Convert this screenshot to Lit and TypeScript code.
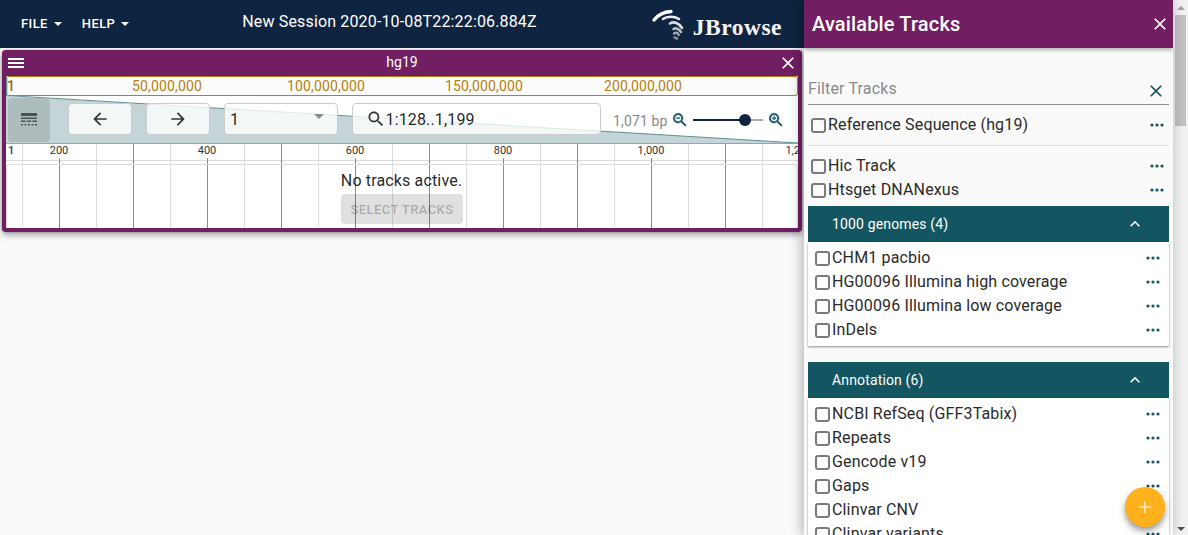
import { LitElement, html, css, svg } from "lit";
import { customElement } from "lit/decorators.js";

const closeIcon = (size: number) => html`<svg width=${size} height=${size} viewBox="0 0 24 24" fill="currentColor">
  <path d="M19 6.41 17.59 5 12 10.59 6.41 5 5 6.41 10.59 12 5 17.59 6.41 19 12 13.41 17.59 19 19 17.59 13.41 12z"></path>
</svg>`;

const searchPath = "M15.5 14h-.79l-.28-.27C15.41 12.59 16 11.11 16 9.5 16 5.91 13.09 3 9.5 3S3 5.91 3 9.5 5.91 16 9.5 16c1.61 0 3.09-.59 4.23-1.57l.27.28v.79l5 4.99L20.49 19l-4.99-5zm-6 0C7.01 14 5 11.99 5 9.5S7.01 5 9.5 5 14 7.01 14 9.5 11.99 14 9.5 14z";

const topLevel = ["Hic Track", "Htsget DNANexus"];
const sections = [
  { title: "1000 genomes (4)", tracks: ["CHM1 pacbio", "HG00096 Illumina high coverage", "HG00096 Illumina low coverage", "InDels"] },
  { title: "Annotation (6)", tracks: ["NCBI RefSeq (GFF3Tabix)", "Repeats", "Gencode v19", "Gaps", "Clinvar CNV", "Clinvar variants"] },
];
const overviewLabels = [
  { text: "50,000,000", left: 126 },
  { text: "100,000,000", left: 281 },
  { text: "150,000,000", left: 439 },
  { text: "200,000,000", left: 598 },
];
const rulerLabels = [
  { text: "200", x: 53 },
  { text: "400", x: 201 },
  { text: "600", x: 349 },
  { text: "800", x: 497 },
  { text: "1,000", x: 645 },
  { text: "1,200", x: 793 },
];
// one line every 37px, inside the 792px wide scale
const gridLines = Array.from({ length: 21 }, (_, i) => 16 + i * 37);

@customElement("app-root")
export class AppRoot extends LitElement {
  static styles = css`
    :host {
      display: flex;
      height: 535px;
      overflow: hidden;
      position: relative;
      background: #fafafa;
      font-family: Roboto, "Liberation Sans", sans-serif;
      color: rgba(0, 0, 0, 0.87);
    }
    .main {
      width: 804px;
      flex: none;
    }
    .appbar {
      height: 48px;
      background: #0f2440;
      color: #fff;
      display: flex;
      align-items: flex-start;
      position: relative;
    }
    .menu {
      display: flex;
      align-items: center;
      gap: 6px;
      font-size: 13px;
      font-weight: 500;
      letter-spacing: 0.4px;
      margin-top: 15px;
      height: 16px;
    }
    .menu.file { margin-left: 21px; }
    .menu.help { margin-left: 20px; }
    .caret {
      width: 0;
      height: 0;
      border-left: 4px solid transparent;
      border-right: 4px solid transparent;
      border-top: 4px solid #fff;
      margin-top: 2px;
    }
    .session {
      font-size: 16px;
      line-height: 20px;
      margin: 12px 0 0 113px;
      white-space: nowrap;
      letter-spacing: 0.15px;
    }
    .logo {
      margin-left: auto;
      margin-right: 22px;
      display: flex;
      align-items: flex-start;
    }
    .logo-mark {
      margin-top: 8px;
      display: flex;
    }
    .logo-text {
      font-family: "Liberation Serif", serif;
      font-size: 23.5px;
      font-weight: 700;
      letter-spacing: 0.5px;
      margin: 12px 0 0 8px;
      line-height: 30px;
      color: #f4f5f7;
    }
    .view {
      margin: 2px 2px 0;
      background: #721e63;
      border-radius: 4px;
      padding: 0 4px 4px;
      box-shadow: 0 3px 6px rgba(0, 0, 0, 0.35), 0 0 2px rgba(0, 0, 0, 0.3);
      position: relative;
    }
    .view-title {
      height: 26px;
      display: flex;
      align-items: center;
      justify-content: center;
      position: relative;
      color: #fff;
      font-size: 14px;
    }
    .view-title .title-text { margin-top: -2px; }
    .hamburger {
      position: absolute;
      left: 2px;
      top: 8px;
      width: 16px;
      height: 10px;
      border-top: 2px solid #fff;
      border-bottom: 2px solid #fff;
      box-sizing: border-box;
    }
    .hamburger::after {
      content: "";
      display: block;
      height: 2px;
      margin-top: 2px;
      background: #fff;
    }
    .view-close {
      position: absolute;
      right: 0;
      top: 3px;
      display: flex;
      color: #fff;
    }
    .view-body {
      position: relative;
      background: #fff;
      height: 152px;
    }
    .overview {
      height: 20px;
      margin-left: 2px;
      box-sizing: border-box;
      border: 1px solid #b5800f;
      border-left: none;
      border-radius: 0 3px 3px 0;
      background: #fcfcfc;
      position: relative;
      font-size: 14px;
      line-height: 20px;
      letter-spacing: 0.15px;
      color: #b5800f;
    }
    .overview span {
      position: absolute;
      top: -1px;
      white-space: nowrap;
    }
    .overview .first {
      left: -1px;
      color: #9a6c0a;
      font-weight: 500;
    }
    .poly {
      position: absolute;
      left: 0;
      top: 0;
      width: 792px;
      height: 68px;
    }
    .controls {
      position: relative;
      height: 48px;
      display: flex;
      align-items: flex-start;
      padding: 2px 0 0 2px;
      box-sizing: border-box;
    }
    .selector {
      width: 42px;
      height: 44px;
      background: #aebcbc;
      border-radius: 4px;
      display: flex;
      align-items: center;
      justify-content: center;
      margin-right: 18px;
      flex: none;
    }
    .btn {
      height: 32px;
      box-sizing: border-box;
      margin-top: 5px;
      background: rgba(255, 255, 255, 0.8);
      border: 1px solid #ccc;
      border-radius: 4px;
      display: flex;
      align-items: center;
      flex: none;
      font-size: 16px;
      letter-spacing: 0.15px;
    }
    .nav {
      width: 64px;
      justify-content: center;
      margin-right: 14px;
    }
    .select {
      width: 114px;
      padding: 0 5px;
      justify-content: space-between;
      margin-right: 14px;
    }
    .select i {
      width: 0;
      height: 0;
      border-left: 5px solid transparent;
      border-right: 5px solid transparent;
      border-top: 5px solid #8a8a8a;
      margin: 0 8px 6px 0;
    }
    .search {
      width: 249px;
      padding-left: 12.5px;
    }
    .bp {
      font-size: 14px;
      letter-spacing: 0.15px;
      color: #8a8a8a;
      margin: 13px 0 0 12px;
      line-height: 20px;
      white-space: nowrap;
    }
    .zoom-out { margin: 13px 0 0 3px; display: flex; }
    .zoom-in { margin: 13px 0 0 4px; display: flex; }
    .slider {
      width: 70px;
      height: 2px;
      margin: 21px 0 0 4px;
      background: #a5acb5;
      position: relative;
      flex: none;
    }
    .slider .fill {
      width: 52px;
      height: 2px;
      background: #0f2440;
    }
    .slider .thumb {
      position: absolute;
      left: 46px;
      top: -5px;
      width: 12px;
      height: 12px;
      border-radius: 50%;
      background: #0f2440;
    }
    .scale {
      position: relative;
      height: 84px;
      overflow: hidden;
    }
    .ruler {
      height: 17px;
      box-sizing: border-box;
      border-bottom: 1px solid #ddd;
    }
    .tracks {
      position: absolute;
      left: 0;
      right: 0;
      top: 20px;
      bottom: 0;
      box-sizing: border-box;
      border: 1px solid #ddd;
      border-bottom: none;
      border-radius: 4px 4px 0 0;
      display: flex;
      flex-direction: column;
      align-items: center;
      padding-top: 6px;
    }
    .empty {
      font-size: 16px;
      line-height: 20px;
      letter-spacing: 0.15px;
      margin-left: -1px;
    }
    .select-tracks {
      margin-top: 3px;
      width: 122px;
      height: 30px;
      border-radius: 4px;
      background: rgba(0, 0, 0, 0.12);
      color: rgba(0, 0, 0, 0.26);
      font-size: 13px;
      font-weight: 500;
      letter-spacing: 0.4px;
      display: flex;
      align-items: center;
      justify-content: center;
    }
    .line {
      position: absolute;
      top: 0;
      bottom: 0;
      width: 1px;
      background: #ddd;
    }
    .line.major { background: #8c8c8c; }
    .line.labelled { top: 14px; }
    .tick {
      position: absolute;
      top: -1px;
      font-size: 11px;
      line-height: 16px;
      color: #333;
      transform: translateX(-50%);
      white-space: nowrap;
    }
    .tick.first { left: 2px; transform: none; font-weight: 500; }

    .drawer {
      width: 369px;
      flex: none;
      position: relative;
      background: #fafafa;
      box-shadow: -2px 0 12px rgba(0, 0, 0, 0.3);
      overflow: hidden;
    }
    .drawer-head {
      height: 48px;
      background: #721e63;
      color: #fff;
      display: flex;
      align-items: center;
      justify-content: space-between;
      padding: 0 3px 0 8px;
      box-shadow: 0 2px 4px rgba(0, 0, 0, 0.3);
      font-size: 20px;
      font-weight: 500;
      letter-spacing: 0.15px;
      position: relative;
    }
    .drawer-body { padding: 0 4px; }
    .filter {
      margin-top: 32px;
      height: 25px;
      box-sizing: border-box;
      border-bottom: 1px solid #8f8f8f;
      display: flex;
      justify-content: space-between;
      font-size: 16px;
      line-height: 17px;
      letter-spacing: 0.15px;
      color: #8a8a8a;
    }
    .filter-x {
      color: #135560;
      margin: 1px 3px 0 0;
      display: flex;
      height: 20px;
    }
    .row {
      height: 24px;
      display: flex;
      align-items: center;
      padding: 0 5px 0 3px;
      font-size: 16px;
      letter-spacing: 0.15px;
      white-space: nowrap;
      color: #2a2a2a;
    }
    .row.nested { padding: 0 9px 0 7px; }
    .box {
      width: 15px;
      height: 15px;
      box-sizing: border-box;
      border: 2px solid #7a7a7a;
      border-radius: 3px;
      margin: 2px 2px 0 0;
      flex: none;
    }
    .dots {
      margin: 2px 0 0 auto;
      display: flex;
    }
    .ref { margin-top: 7px; }
    hr {
      border: none;
      border-top: 1px solid #ddd;
      margin: 9px 0 7px;
      height: 0;
    }
    .acc-head {
      height: 36px;
      background: #135560;
      color: #fff;
      font-size: 14px;
      letter-spacing: 0.15px;
      display: flex;
      align-items: center;
      justify-content: space-between;
      padding: 0 24px 0 24px;
    }
    .section { margin-top: 5px; }
    .section + .section { margin-top: 16px; }
    .acc-body {
      background: #fff;
      padding: 3px 0 5px;
      box-shadow: 0 1px 2px rgba(0, 0, 0, 0.45);
    }
    .scrollbar {
      width: 15px;
      flex: none;
      background: #f1f1f1;
      display: flex;
      flex-direction: column;
      align-items: center;
    }
    .arrow-up, .arrow-down {
      width: 0;
      height: 0;
      border-left: 4px solid transparent;
      border-right: 4px solid transparent;
    }
    .arrow-up {
      border-bottom: 4px solid #a3a3a3;
      margin-top: 6px;
    }
    .arrow-down {
      border-top: 4px solid #505050;
      margin: auto 0 4px;
    }
    .thumb-bar {
      width: 11px;
      height: 111px;
      background: #c1c1c1;
      margin-top: 5px;
    }
    .fab {
      position: absolute;
      left: 1125px;
      top: 487px;
      width: 40px;
      height: 40px;
      border-radius: 50%;
      background: #ffb11d;
      box-shadow: 0 3px 5px rgba(0, 0, 0, 0.3), 0 6px 10px rgba(0, 0, 0, 0.14);
      display: flex;
      align-items: center;
      justify-content: center;
    }
  `;

  private dots() {
    return html`<svg class="dots" width="14" height="4" viewBox="0 0 14 4" fill="#135560">
      <circle cx="2" cy="2" r="1.6"></circle>
      <circle cx="7" cy="2" r="1.6"></circle>
      <circle cx="12" cy="2" r="1.6"></circle>
    </svg>`;
  }

  private row(name: string, nested = false, cls = "") {
    return html`<div class="row ${nested ? "nested" : ""} ${cls}">
      <div class="box"></div><span>${name}</span>${this.dots()}
    </div>`;
  }

  private logo() {
    return html`<svg width="34" height="34" viewBox="0 0 34 34" fill="none" stroke-linecap="round">
      <path d="M3 12 C6.500 7.500 12 4 20 3.500" stroke="#fff" stroke-width="3.400"></path>
      <path d="M12 11 C16 8 23 8 28 11" stroke="#eceef0" stroke-width="2.600"></path>
      <path d="M19 15.500 C23 13 28 15 31 20" stroke="#dcdee0" stroke-width="2.600"></path>
      <path d="M22.500 21 C25 19.500 28 21 30 24" stroke="#b8babd" stroke-width="2.600"></path>
      <path d="M23 25.500 C25 24 27 25 27.700 27" stroke="#a4a6a9" stroke-width="2.400"></path>
      <path d="M23.500 29.500 L26 30.500" stroke="#8e9093" stroke-width="2.600"></path>
    </svg>`;
  }

  private magnifier(plus: boolean) {
    return html`<svg width="18" height="18" viewBox="0 0 24 24" fill="#135560" stroke="#135560" stroke-width="0.6">
      <path d=${searchPath}></path>
      ${plus
        ? svg`<path d="M12 10h-2v2H9v-2H7V9h2V7h1v2h2v1z"></path>`
        : svg`<path d="M7 9h5v1H7z"></path>`}
    </svg>`;
  }

  render() {
    return html`
      <div class="main">
        <div class="appbar">
          <div class="menu file">FILE <span class="caret"></span></div>
          <div class="menu help">HELP <span class="caret"></span></div>
          <div class="session">New Session 2020-10-08T22:22:06.884Z</div>
          <div class="logo">
            <div class="logo-mark">${this.logo()}</div>
            <div class="logo-text">JBrowse</div>
          </div>
        </div>
        <div class="view">
          <div class="view-title">
            <div class="hamburger"></div>
            <span class="title-text">hg19</span>
            <div class="view-close">${closeIcon(20)}</div>
          </div>
          <div class="view-body">
            <svg class="poly" viewBox="0 0 792 68">
              <polygon points="0,0 2,0 2,20 792,67 792,68 0,68" fill="#c4d4d7"></polygon>
              <polyline points="0.5,0 0.5,19.5 792,67" fill="none" stroke="#5f8f94" stroke-width="1"></polyline>
              <line x1="0" y1="67.5" x2="792" y2="67.5" stroke="#8fa9ac"></line>
            </svg>
            <div class="overview">
              <span class="first">1</span>
              ${overviewLabels.map((l) => html`<span style="left:${l.left - 2}px">${l.text}</span>`)}
            </div>
            <div class="controls">
              <div class="selector">
                <svg width="16" height="14" viewBox="0 0 16 14" fill="#4a5455">
                  <rect x="0" y="0" width="16" height="3"></rect>
                  <rect x="0" y="4.500" width="16" height="1.500"></rect>
                  <rect x="0" y="7.500" width="4.500" height="1.500"></rect>
                  <rect x="5.700" y="7.500" width="4.500" height="1.500"></rect>
                  <rect x="11.500" y="7.500" width="4.500" height="1.500"></rect>
                  <rect x="0" y="11" width="2" height="1.500"></rect>
                  <rect x="3.500" y="11" width="2" height="1.500"></rect>
                  <rect x="7" y="11" width="2" height="1.500"></rect>
                  <rect x="10.500" y="11" width="2" height="1.500"></rect>
                  <rect x="14" y="11" width="2" height="1.500"></rect>
                </svg>
              </div>
              <div class="btn nav">
                <svg width="20" height="20" viewBox="0 0 24 24" fill="#333"><path d="M20 11H7.830l5.590-5.590L12 4l-8 8 8 8 1.410-1.410L7.830 13H20v-2z"></path></svg>
              </div>
              <div class="btn nav">
                <svg width="20" height="20" viewBox="0 0 24 24" fill="#333"><path d="M12 4l-1.410 1.410L16.170 11H4v2h12.170l-5.580 5.590L12 20l8-8z"></path></svg>
              </div>
              <div class="btn select"><span>1</span><i></i></div>
              <div class="btn search">
                <svg width="20" height="20" viewBox="0 0 24 24" fill="#333"><path d=${searchPath}></path></svg>
                <span>1:128..1,199</span>
              </div>
              <div class="bp">1,071 bp</div>
              <div class="zoom-out">${this.magnifier(false)}</div>
              <div class="slider"><div class="fill"></div><div class="thumb"></div></div>
              <div class="zoom-in">${this.magnifier(true)}</div>
            </div>
            <div class="scale">
              ${gridLines.map((x, i) => html`<div
                class="line ${i % 2 ? "major" : ""} ${i % 4 === 1 ? "labelled" : ""}"
                style="left:${x}px"
              ></div>`)}
              <div class="ruler">
                <span class="tick first">1</span>
                ${rulerLabels.map((l) => html`<span class="tick" style="left:${l.x}px">${l.text}</span>`)}
              </div>
              <div class="tracks">
                <div class="empty">No tracks active.</div>
                <div class="select-tracks">SELECT TRACKS</div>
              </div>
            </div>
          </div>
        </div>
      </div>
      <div class="drawer">
        <div class="drawer-head">
          <span>Available Tracks</span>
          <span style="display:flex">${closeIcon(20)}</span>
        </div>
        <div class="drawer-body">
          <div class="filter">
            <span>Filter Tracks</span>
            <span class="filter-x">${closeIcon(20)}</span>
          </div>
          ${this.row("Reference Sequence (hg19)", false, "ref")}
          <hr />
          ${topLevel.map((t) => this.row(t))}
          ${sections.map((s) => html`<div class="section">
            <div class="acc-head">
              <span>${s.title}</span>
              <svg width="20" height="20" viewBox="0 0 24 24" fill="#fff"><path d="M12 8l-6 6 1.410 1.410L12 10.830l4.590 4.580L18 14z"></path></svg>
            </div>
            <div class="acc-body">${s.tracks.map((t) => this.row(t, true))}</div>
          </div>`)}
        </div>
      </div>
      <div class="scrollbar">
        <div class="arrow-up"></div>
        <div class="thumb-bar"></div>
        <div class="arrow-down"></div>
      </div>
      <div class="fab">
        <svg width="14" height="14" viewBox="0 0 14 14" fill="#fff"><path d="M6.400 1h1.200v5.400H13v1.200H7.600V13H6.400V7.600H1V6.400h5.400z"></path></svg>
      </div>
    `;
  }
}
